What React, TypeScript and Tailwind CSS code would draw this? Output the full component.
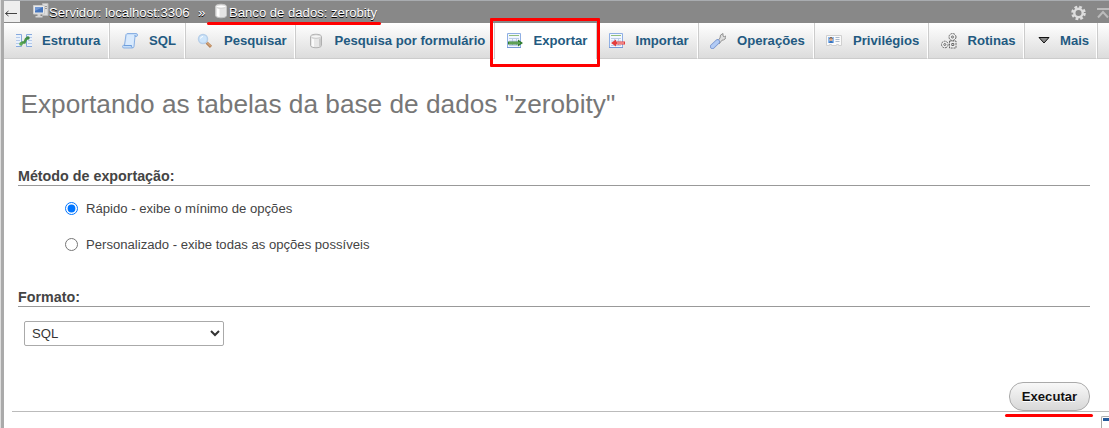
import React from 'react';

type IconProps = { children: React.ReactNode };

function Icon({ children }: IconProps) {
  return (
    <svg width="16" height="16" viewBox="0 0 16 16" fill="none" className="block shrink-0">
      {children}
    </svg>
  );
}

const StructureIcon = () => (
  <Icon>
    <path d="M0 1h5.500v13H0zM10.500 1H16v13h-5.500z" fill="#e9f1fb" />
    <path d="M0 1.500h5.500v12H0M16 1.500h-5.500v12H16" stroke="#86a9dd" />
    <path d="M0 4.500h4M0 7.500h4M0 10.500h4M12 4.500h4M12 7.500h4M12 10.500h4" stroke="#b5caea" />
    <path d="M4.500 11l2-1.500h2L10 6l2-1.500" stroke="#48964a" strokeWidth="2.600" />
    <circle cx="5" cy="11" r="1.800" fill="#5eac55" />
    <circle cx="12" cy="5" r="1.700" fill="#3e8845" />
  </Icon>
);

const SqlIcon = () => (
  <Icon>
    <path d="M4 1.500Q4.500.5 6 .5h8q1.500 0 1.500 1.500T14 3.500h-1l-1 10q0 1.500-2 1.500H2Q.5 15 .5 13.500T2.500 12z" fill="#c5ddf8" stroke="#8ab0e3" />
    <path d="M5 2l-1.500 10h6.500q0 2 1 2l1.500-12z" fill="#d9eafd" />
    <path d="M2 12.500h7.500q-.5 1.500.8 2.200M13 3.500V2" stroke="#6e9edb" />
  </Icon>
);

const SearchIcon = () => (
  <Icon>
    <path d="M9.500 9.500l4.500 4.300" stroke="#b8855b" strokeWidth="3" />
    <path d="M9.500 9l4.300 4.300" stroke="#e6ba8c" strokeWidth="1" />
    <circle cx="6" cy="6" r="4.500" fill="#cde5fb" stroke="#b7cfe9" strokeWidth="1.500" />
    <path d="M3.500 5.500Q4 3.500 6 3.500" stroke="#fff" />
  </Icon>
);

const DatabaseIcon = () => (
  <Icon>
    <path d="M2.500 3.500v9c0 3 11 3 11 0v-9c0-3-11-3-11 0z" fill="#e7e7e7" stroke="#b0b0b0" />
    <path d="M4 5.500v7.500l2 1V6.200z" fill="#fafafa" />
    <path d="M11 6v8l2-1V5z" fill="#cbcbcb" />
    <ellipse cx="8" cy="3.500" rx="5" ry="1.800" fill="#f5f5f5" stroke="#bcbcbc" strokeWidth=".8" />
  </Icon>
);

const HeaderDatabaseIcon = () => (
  <Icon>
    <path d="M2.500 3.500v9c0 3 11 3 11 0v-9c0-3-11-3-11 0z" fill="#e4e4e4" stroke="#c4c4c4" />
    <path d="M4 5v8l2.500 1V6z" fill="#fff" />
    <ellipse cx="8" cy="3.500" rx="5" ry="1.700" fill="#fff" stroke="#c7c7c7" strokeWidth=".8" />
  </Icon>
);

function TableBase() {
  return (
    <>
      <path d="M.5.500h13v14H.5z" fill="#f2f7ff" stroke="#8fafe4" />
      <path d="M2 2.500h10" stroke="#91be7d" />
      <path d="M2 5.500h10M2 8h10M2 12.500h10M5.500 5v8M9.500 5v8" stroke="#bccde9" />
      <path d="M0 14.500h14" stroke="#7598d5" />
    </>
  );
}

const ExportIcon = () => (
  <Icon>
    <TableBase />
    <path d="M1 8.500h10V6.500L16 10l-5 3.500v-2H1z" fill="#317d30" />
    <path d="M2 10h11" stroke="#8cc47d" />
  </Icon>
);

const ImportIcon = () => (
  <Icon>
    <TableBase />
    <path d="M16 8.500H7V6.500L2 10l5 3.500v-2h9z" fill="#e33d3d" />
    <path d="M8 10h7" stroke="#fac5c5" />
  </Icon>
);

const WrenchIcon = () => (
  <Icon>
    <path d="M7 9l3-4Q9.500 1.500 13 .5v2.500l1.200.8L15.900 3Q16 7 12 7.200L9 11z" fill="#ddd" stroke="#929292" />
    <path d="M2.500 13.500L7.500 8.700" stroke="#7895cf" strokeWidth="5" strokeLinecap="round" />
    <path d="M2.500 13.500L7.500 8.700" stroke="#b2cbf5" strokeWidth="3.400" strokeLinecap="round" />
  </Icon>
);

const PrivilegesIcon = () => (
  <Icon>
    <path d="M.5 2.500h15v10h-3v-1h-2v1h-5v-1h-2v1h-3z" fill="#fafafa" stroke="#d0d0d0" />
    <path d="M2 4h6v6H2z" fill="#8bb8ed" />
    <path d="M3 10q0-2.500 2-2.500T7 10z" fill="#3973bd" />
    <circle cx="5" cy="6.500" r="1.500" fill="#e6a779" />
    <path d="M3.500 5.500q1.500-2 3 0" stroke="#73441f" />
    <path d="M9.500 4.500h4M9.500 6.500h4M9.500 8.500h4" stroke="#a9b9cd" />
  </Icon>
);

const RoutinesIcon = () => (
  <Icon>
    <g stroke="#666">
      <g strokeDasharray="2 .8">
        <circle cx="11.500" cy="4" r="3.500" fill="#eee" />
        <circle cx="3.800" cy="11.500" r="3.300" fill="#eee" />
        <path d="M8.500 8h6.500v7H8.500z" fill="#eee" />
      </g>
      <circle cx="11.500" cy="4" r="1" fill="#fff" />
      <circle cx="3.800" cy="11.500" r="1" fill="#fff" />
      <path d="M10.800 10.500h2v2h-2z" fill="#fff" />
    </g>
  </Icon>
);

const MoreIcon = () => (
  <Icon>
    <path d="M3 4.500h10L8 10z" fill="#888" stroke="#111" />
  </Icon>
);

const ServerIcon = () => (
  <Icon>
    <path d="M9.500.5h5.500v12H9.500z" fill="#ddd" stroke="#b9b9b9" />
    <path d="M11 3.500h3M11 5.500h3" stroke="#999" />
    <path d="M.5 2.500h11v8.500H.5z" fill="#e9e9e9" stroke="#ccc" />
    <path d="M2 4h8v5.500H2z" fill="#4374bd" />
    <path d="M2 4h8L2 8z" fill="#7499d3" />
    <path d="M4.500 11h3v2h2v1.500H2.500V13h2z" fill="#d4d4d4" />
  </Icon>
);

type Tab = { label: string; icon: React.ReactNode; box: string; active?: boolean };

const tabs: Tab[] = [
  { label: 'Estrutura', icon: <StructureIcon />, box: 'w-[105px] pl-3 gap-[10px]' },
  { label: 'SQL', icon: <SqlIcon />, box: 'w-[76px] pl-3 gap-[11px]' },
  { label: 'Pesquisar', icon: <SearchIcon />, box: 'w-[110px] pl-[11px] gap-[11px]' },
  { label: 'Pesquisa por formulário', icon: <DatabaseIcon />, box: 'w-[199px] pl-3 gap-[10.5px]' },
  { label: 'Exportar', icon: <ExportIcon />, box: 'w-[103px] pl-3 gap-[10.5px]', active: true },
  { label: 'Importar', icon: <ImportIcon />, box: 'w-[101px] pl-[11px] gap-[10.5px]' },
  { label: 'Operações', icon: <WrenchIcon />, box: 'w-[116px] pl-[11px] gap-[11px]' },
  { label: 'Privilégios', icon: <PrivilegesIcon />, box: 'w-[114px] pl-[11px] gap-[11px]' },
  { label: 'Rotinas', icon: <RoutinesIcon />, box: 'w-[96px] pl-[12px] gap-[10.5px]' },
  { label: 'Mais', icon: <MoreIcon />, box: 'w-[73px] pl-[11px] gap-2' },
];

function TopBar() {
  return (
    <header className="flex h-[23px] items-center border-t border-[#a9acb0] bg-[#888] text-white [text-shadow:0_1px_0_#000]">
      <div className="mb-px flex h-[21px] w-4 shrink-0 items-center bg-[#eee]">
        <svg width="16" height="20" viewBox="0 0 16 20" fill="none">
          <path d="M1.500 11.500H13M4.500 9l-3 2.500 3 2.500" stroke="#444" />
        </svg>
      </div>
      <div className="-mt-0.5 ml-[13px]"><ServerIcon /></div>
      <span className="w-[149px] whitespace-nowrap pt-0.5">Servidor: localhost:3306</span>
      <span className="w-[15px] pt-0.5">»</span>
      <div className="-mt-0.5"><HeaderDatabaseIcon /></div>
      <span className="whitespace-nowrap pt-0.5">Banco de dados: zerobity</span>
      <svg className="ml-auto mr-0.5 shrink-0" width="36" height="20" viewBox="0 0 36 20" fill="none">
        <circle cx="7.500" cy="11" r="6" stroke="#ddd" strokeWidth="2.600" strokeDasharray="2.700 2.012" />
        <circle cx="7.500" cy="11" r="4.200" stroke="#ddd" strokeWidth="2.400" />
      </svg>
    </header>
  );
}

function Tabs() {
  return (
    <nav className="flex h-9 border-b border-[#ccc] bg-linear-to-b from-white to-[#dcdcdc] font-bold text-[#235a81]">
      {tabs.map((tab) => (
        <div
          key={tab.label}
          className={`-mb-px flex h-9 shrink-0 items-center whitespace-nowrap border-r border-l border-l-[#ccc] first:border-l-0 ${tab.box} ${tab.active ? 'border-r-[#ccc] bg-white' : 'border-b border-r-white border-b-[#ccc]'}`}
        >
          {tab.icon}
          <span>{tab.label}</span>
        </div>
      ))}
      <div className="grow border-l border-[#ccc]" />
    </nav>
  );
}

export default function App() {
  return (
    <div className="relative flex h-[428px] w-[1109px] overflow-hidden bg-white font-['Liberation_Sans',Arial,sans-serif] text-[13.12px] leading-4 text-[#444]">
      <div className="w-1 shrink-0 border-l border-[#ddd] bg-[#aaa]" />
      <div className="min-w-0 flex-1">
        <TopBar />
        <Tabs />
        <main className="pl-[14px] pr-[19px]">
          <h1 className="ml-[2.500px] mt-[30px] text-[26.24px] leading-[30px] text-[#777]">Exportando as tabelas da base de dados "zerobity"</h1>
          <h2 className="mt-[48px] h-[19px] border-b border-[#999] text-[14.3px] font-bold leading-[18px]">Método de exportação:</h2>
          <div className="ml-[47px] mt-[14px] flex flex-col gap-5">
            <label className="flex h-4 items-center gap-2">
              <input type="radio" name="method" defaultChecked className="m-0 h-[13px] w-[13px]" />
              <span className="pt-0.5">Rápido - exibe o mínimo de opções</span>
            </label>
            <label className="flex h-4 items-center gap-2">
              <input type="radio" name="method" className="m-0 h-[13px] w-[13px]" />
              <span className="pt-0.5">Personalizado - exibe todas as opções possíveis</span>
            </label>
          </div>
          <h2 className="mt-[36px] h-[19px] border-b border-[#999] text-[14.3px] font-bold leading-[18px]">Formato:</h2>
          <select className="ml-[6px] mt-[14px] block h-[25px] w-[200px] rounded-[2px] border border-[#aaa] bg-white pl-[3px] text-[13.12px] text-[#333]">
            <option>SQL</option>
          </select>
          <div className="-ml-[6px] -mr-[19px] mt-[36px] flex h-[30px] justify-end border-b border-[#bbb] pr-[19px]">
            <button className="h-[29px] w-[81px] rounded-[14px] border border-[#aaa] bg-linear-to-b from-[#f8f8f8] to-[#d8d8d8] text-[13.12px] font-bold text-[#111] [text-shadow:0_1px_0_#fff]">Executar</button>
          </div>
        </main>
      </div>

      <div className="absolute left-[207px] top-[22px] h-[3px] w-[174px] rounded-full bg-[#f00]" />
      <div className="absolute left-[490px] top-[18px] h-[49px] w-[110px] rounded-[1px] border-3 border-[#f00]" />
      <div className="absolute left-[1005px] top-[414px] h-[3px] w-[88px] rounded-full bg-[#f00]" />
      <svg className="absolute left-[1097px] top-[8px]" width="12" height="11" viewBox="0 0 12 11" fill="none">
        <path d="M0 1H12M1 9.500L6 4l5 5.500" stroke="#bbb" strokeWidth="2" />
      </svg>
      <div className="absolute left-[1101px] top-[416px] h-3 w-2 rounded-tl-[2px] border-l border-t border-[#aaa] bg-white pl-px pt-px">
        <div className="h-[3px] bg-[#235a9c]" />
      </div>
    </div>
  );
}
